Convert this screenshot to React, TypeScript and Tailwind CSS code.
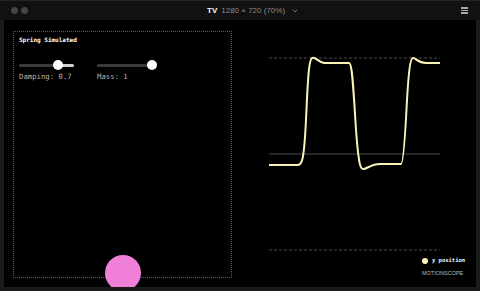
import { ChevronDown } from 'lucide-react';

const curve =
  'M29 145 L58 145 C62 145 64 140 66 100 C68 55 69 40 72 38 C75 36 78 42 84 43 L109 43 C112 43 113 60 116 110 C119 150 121 149 124 149 C128 148 132 144 140 144 L161 144 C163 144 165 120 167 80 C169 45 171 38 173 38 C176 38 178 43 186 43 L200 43';

function Slider({ pos }: { pos: number }) {
  return (
    <div className="relative w-[55px] h-[10px]">
      <div className="absolute left-0 right-0 top-[3.5px] h-[3px] rounded-full bg-[#3a3a3a]" />
      <div className="absolute right-0 top-[3.5px] h-[3px] rounded-full bg-[#cfcfcf]" style={{ left: pos }} />
      <div className="absolute top-0 w-[10px] h-[10px] -ml-[5px] rounded-full bg-white" style={{ left: pos }} />
    </div>
  );
}

export default function App() {
  return (
    <div className="w-[480px] h-[291px] bg-[#1b1b1b] flex flex-col overflow-hidden" style={{ fontFamily: '"Liberation Sans", Arial, sans-serif' }}>
      {/* title bar */}
      <div className="h-[20px] bg-[#111111] border-t border-[#242424] flex items-center px-[11px] relative">
        <div className="flex gap-[3px]">
          <div className="w-[7px] h-[7px] rounded-full bg-[#444]" />
          <div className="w-[7px] h-[7px] rounded-full bg-[#444]" />
        </div>
        <div className="absolute left-[207px] top-[6px] flex items-center gap-[4px] text-[8px] leading-none">
          <span className="text-white font-bold">TV</span>
          <span className="text-[#8a8a8a]">1280 × 720 (70%)</span>
          <ChevronDown size={8} className="text-[#8a8a8a] ml-[2px]" strokeWidth={2.5} />
        </div>
        <div className="ml-auto mr-[1px] flex flex-col gap-[1px]">
          <div className="w-[7px] h-[1.5px] bg-[#aaa]" />
          <div className="w-[7px] h-[1.5px] bg-[#aaa]" />
          <div className="w-[7px] h-[1.5px] bg-[#aaa]" />
        </div>
      </div>

      {/* content */}
      <div className="mx-[4px] h-[267px] bg-black flex relative overflow-hidden" style={{ fontFamily: '"DejaVu Sans Mono", monospace' }}>
        <div className="w-[236px] pl-[9px] pt-[11px]">
          <div className="w-[219px] h-[247px] border border-dotted border-[#5a5a5a] px-[5px] pt-[5px]">
            <div className="text-[6px] leading-none text-white font-bold">Spring Simulated</div>
            <div className="flex gap-[23px] mt-[17px]">
              <div className="flex flex-col gap-[3px]">
                <Slider pos={39} />
                <span className="text-[7.3px] leading-none text-[#b5b5b5]">Damping: 0.7</span>
              </div>
              <div className="flex flex-col gap-[3px]">
                <Slider pos={55} />
                <span className="text-[7.3px] leading-none text-[#b5b5b5]">Mass: 1</span>
              </div>
            </div>
          </div>
        </div>
        <div className="absolute left-[101px] top-[235px] w-[36px] h-[36px] rounded-full bg-[#ef7fd7]" />

        <div className="flex-1 flex flex-col">
          <svg width="236" height="232" viewBox="0 0 236 232" className="shrink-0">
            <line x1="29" y1="38" x2="200" y2="38" stroke="#5c5c5c" strokeWidth="0.8" strokeDasharray="3 2" />
            <line x1="29" y1="134" x2="200" y2="134" stroke="#7d7d7d" strokeWidth="0.6" />
            <line x1="29" y1="230" x2="200" y2="230" stroke="#5c5c5c" strokeWidth="0.8" strokeDasharray="3 2" />
            <path d={curve} fill="none" stroke="#fbf2b8" strokeWidth="2" strokeLinejoin="round" />
          </svg>
          <div className="flex items-center gap-[4px] ml-[182px] mt-[6px]">
            <div className="w-[6px] h-[6px] rounded-full bg-[#fbf2b8]" />
            <span className="text-[5.5px] leading-none text-white font-bold">y position</span>
          </div>
          <div className="ml-[182px] mt-[7px] text-[5.5px] leading-none text-[#bbb]" style={{ fontFamily: '"Liberation Sans", Arial, sans-serif' }}>
            MOTIONSCOPE
          </div>
        </div>
      </div>
    </div>
  );
}
